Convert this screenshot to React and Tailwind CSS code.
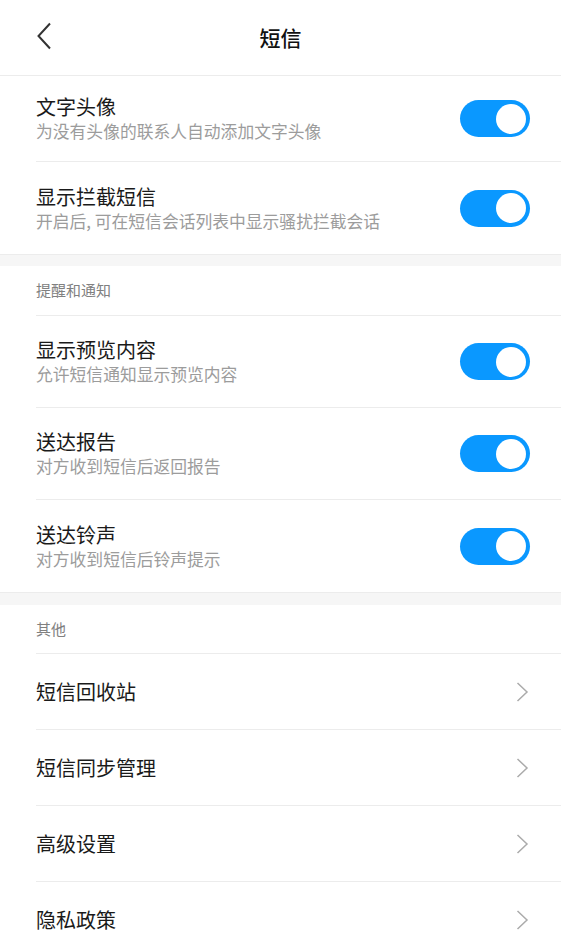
const font = { fontFamily: '"Noto Sans CJK SC", "Noto Sans", sans-serif' }

function Toggle() {
  return (
    <div className="flex h-[37px] w-[70px] shrink-0 items-center justify-end rounded-full bg-[#0a98ff] pr-[4px]">
      <div className="h-[30px] w-[30px] rounded-full bg-white" />
    </div>
  )
}

function Chevron() {
  return (
    <svg width="13" height="20" viewBox="0 0 13 20" className="shrink-0">
      <path d="M1.5 1 L11 10 L1.5 19" fill="none" stroke="#ababab" strokeWidth="1.5" />
    </svg>
  )
}

function ToggleRow({ title, sub, last, height = 'h-[92px]' }) {
  return (
    <div className={`ml-9 flex ${height} items-center pr-[31px] ${last ? '' : 'border-b border-[#ececec]'}`}>
      <div className="flex flex-1 flex-col">
        <span className="text-[20px] leading-[26px] text-[#1a1a1a]">{title}</span>
        <span className="text-[16.8px] leading-[23px] text-[#9c9c9c]">{sub}</span>
      </div>
      <Toggle />
    </div>
  )
}

function LinkRow({ title, last }) {
  return (
    <div className={`ml-9 flex h-[76px] items-center pr-8 ${last ? '' : 'border-b border-[#ececec]'}`}>
      <span className="flex-1 text-[20px] leading-[26px] text-[#1a1a1a]">{title}</span>
      <Chevron />
    </div>
  )
}

function SectionHeader({ label, height = 'h-[50px]' }) {
  return (
    <div className={`ml-9 flex ${height} items-center border-b border-[#ececec]`}>
      <span className="text-[15px] text-[#808080]">{label}</span>
    </div>
  )
}

function Gap({ height = 'h-3' }) {
  return <div className={`${height} border-t border-[#ececec] bg-[#f6f6f6]`} />
}

export default function App() {
  return (
    <div className="h-[952px] w-[561px] overflow-hidden bg-white" style={font}>
      <header className="relative flex h-[76px] items-center justify-center border-b border-[#ececec]">
        <svg width="16" height="28" viewBox="0 0 16 28" className="absolute left-[36px] top-[22px]">
          <path d="M14 1.5 L2.5 14 L14 26.5" fill="none" stroke="#333" strokeWidth="2" />
        </svg>
        <h1 className="text-[21px] font-medium text-[#111]">短信</h1>
      </header>

      <ToggleRow title="文字头像" sub="为没有头像的联系人自动添加文字头像" height="h-[86px]" />
      <ToggleRow title="显示拦截短信" sub="开启后, 可在短信会话列表中显示骚扰拦截会话" last />

      <Gap />
      <SectionHeader label="提醒和通知" />
      <ToggleRow title="显示预览内容" sub="允许短信通知显示预览内容" />
      <ToggleRow title="送达报告" sub="对方收到短信后返回报告" />
      <ToggleRow title="送达铃声" sub="对方收到短信后铃声提示" last />

      <Gap height="h-[13px]" />
      <SectionHeader label="其他" height="h-[49px]" />
      <LinkRow title="短信回收站" />
      <LinkRow title="短信同步管理" />
      <LinkRow title="高级设置" />
      <LinkRow title="隐私政策" last />
    </div>
  )
}
